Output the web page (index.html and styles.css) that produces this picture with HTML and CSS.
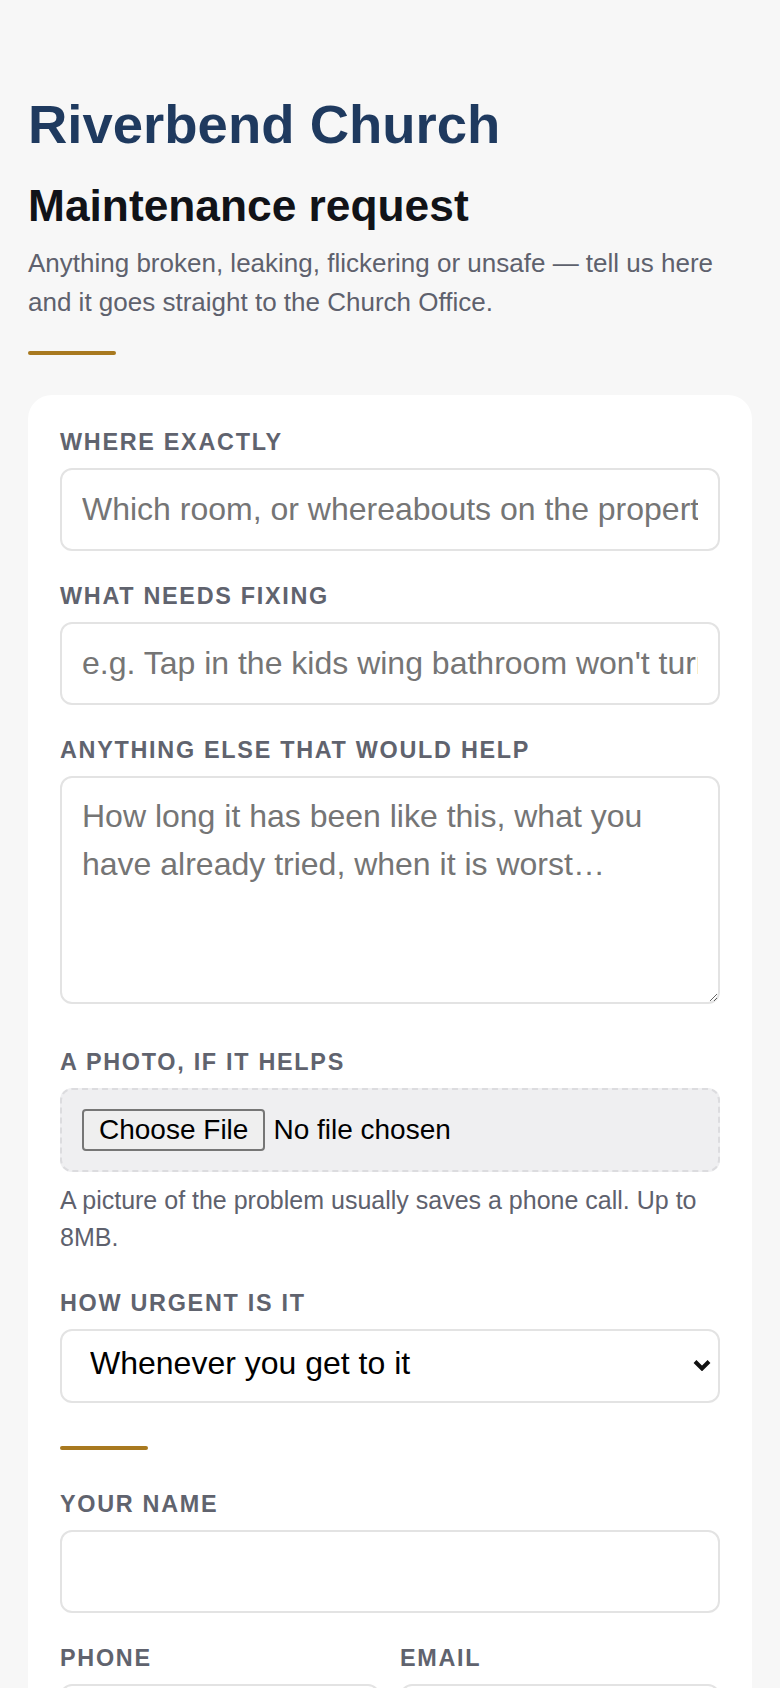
FILE: index.html
```html
<!DOCTYPE html>
<html lang="en">
<head>
<meta charset="utf-8">
<title>Maintenance request — Riverbend Church</title>
<link rel="stylesheet" href="styles.css">
</head>
<body>
<main class="page">
  <header class="intro">
    <h1 class="church">Riverbend Church</h1>
    <h2 class="title">Maintenance request</h2>
    <p class="lede">Anything broken, leaking, flickering or unsafe — tell us here and it goes straight to the Church Office.</p>
    <div class="rule"></div>
  </header>

  <form class="card">
    <div class="field">
      <label class="label" for="where">Where exactly</label>
      <input class="control" id="where" type="text" placeholder="Which room, or whereabouts on the property?">
    </div>

    <div class="field">
      <label class="label" for="what">What needs fixing</label>
      <input class="control" id="what" type="text" placeholder="e.g. Tap in the kids wing bathroom won't turn off">
    </div>

    <div class="field field-area">
      <label class="label" for="more">Anything else that would help</label>
      <textarea class="control area" id="more" placeholder="How long it has been like this, what you have already tried, when it is worst…"></textarea>
    </div>

    <div class="field field-photo">
      <label class="label" for="photo">A photo, if it helps</label>
      <input class="file" id="photo" type="file" accept="image/*">
      <p class="hint">A picture of the problem usually saves a phone call. Up to 8MB.</p>
    </div>

    <div class="field field-select">
      <label class="label" for="urgency">How urgent is it</label>
      <div class="select-wrap">
        <select class="control select" id="urgency">
          <option>Whenever you get to it</option>
          <option>This week, please</option>
          <option>Today — it's a problem</option>
          <option>Right now — it's unsafe</option>
        </select>
        <svg class="chev" width="18" height="12" viewBox="0 0 18 12" aria-hidden="true"><path d="M2 2.5 L9 9.5 L16 2.5" fill="none" stroke="#111" stroke-width="4"/></svg>
      </div>
    </div>

    <div class="rule rule-inner"></div>

    <div class="field">
      <label class="label" for="name">Your name</label>
      <input class="control" id="name" type="text">
    </div>

    <div class="row">
      <div class="field">
        <label class="label" for="phone">Phone</label>
        <input class="control" id="phone" type="tel">
      </div>
      <div class="field">
        <label class="label" for="email">Email</label>
        <input class="control" id="email" type="email">
      </div>
    </div>

    <button class="submit" type="submit">Send to the Church Office</button>
  </form>
</main>
</body>
</html>
```

FILE: styles.css
```css
html, body {
  margin: 0;
  padding: 0;
  background: #f7f7f7;
}

body {
  font-family: "Liberation Sans", Arial, sans-serif;
  color: #111;
}

.page {
  padding: 95px 28px 80px;
}

.church {
  margin: 0;
  font-size: 54.5px;
  line-height: 59.4px;
  font-weight: 700;
  color: #1f3a5f;
}

.title {
  margin: 26px 0 0;
  font-size: 44.3px;
  line-height: 52.8px;
  font-weight: 700;
  color: #111318;
}

.lede {
  margin: 11px 0 0;
  font-size: 26px;
  line-height: 38.3px;
  color: #5e616d;
}

.rule {
  width: 88px;
  height: 4px;
  border-radius: 2px;
  background: #a8791f;
  margin-top: 30px;
}

.card {
  margin-top: 40px;
  background: #fff;
  border-radius: 24px;
  padding: 34px 32px 48px;
}

.field {
  margin-bottom: 32px;
}

.label {
  display: block;
  font-size: 23.4px;
  line-height: 26px;
  font-weight: 700;
  letter-spacing: 0.073em;
  text-transform: uppercase;
  color: #60636e;
  margin-bottom: 13px;
}

.control {
  display: block;
  width: 100%;
  box-sizing: border-box;
  height: 83px;
  margin: 0;
  padding: 0 20px;
  border: 2px solid #e3e3e3;
  border-radius: 12px;
  background: #fff;
  font-family: "Liberation Sans", Arial, sans-serif;
  font-size: 32px;
  color: #111;
  outline: none;
}

.control::placeholder {
  color: #757575;
  opacity: 1;
}

.field-area {
  margin-bottom: 45px;
}

.area {
  height: 228px;
  padding: 14px 20px 12px;
  line-height: 48px;
  resize: vertical;
}

.file {
  display: block;
  width: 100%;
  box-sizing: border-box;
  margin: 0;
  padding: 19px 20px;
  border: 2px dashed #dcdcdf;
  border-radius: 12px;
  background: #efeff1;
  font-family: "Liberation Sans", Arial, sans-serif;
  font-size: 28px;
  color: #000;
}

.file::file-selector-button {
  font-family: "Liberation Sans", Arial, sans-serif;
  font-size: 28px;
  color: #000;
  padding: 3px 15px;
  margin: 0 8px 0 0;
  border: 2px solid #767676;
  border-radius: 4px;
  background: #efefef;
}

.field-photo {
  margin-bottom: 33px;
}

.hint {
  margin: 10px 0 0;
  font-size: 25px;
  line-height: 37.5px;
  color: #5e616d;
}

.field-select {
  margin-bottom: 0;
}

.select-wrap {
  position: relative;
}

.select {
  height: 74px;
  padding: 0 60px 6px 28px;
  appearance: none;
  -webkit-appearance: none;
  color: #000;
}

.chev {
  position: absolute;
  right: 9px;
  top: 30px;
  pointer-events: none;
}

.rule-inner {
  margin-top: 43px;
  margin-bottom: 41px;
}

.row {
  display: grid;
  grid-template-columns: 1fr 1fr;
  column-gap: 20px;
}

.submit {
  display: block;
  width: 100%;
  height: 88px;
  margin-top: 8px;
  border: 0;
  border-radius: 12px;
  background: #1f3a5f;
  color: #fff;
  font-family: "Liberation Sans", Arial, sans-serif;
  font-size: 30px;
  font-weight: 700;
}
```
